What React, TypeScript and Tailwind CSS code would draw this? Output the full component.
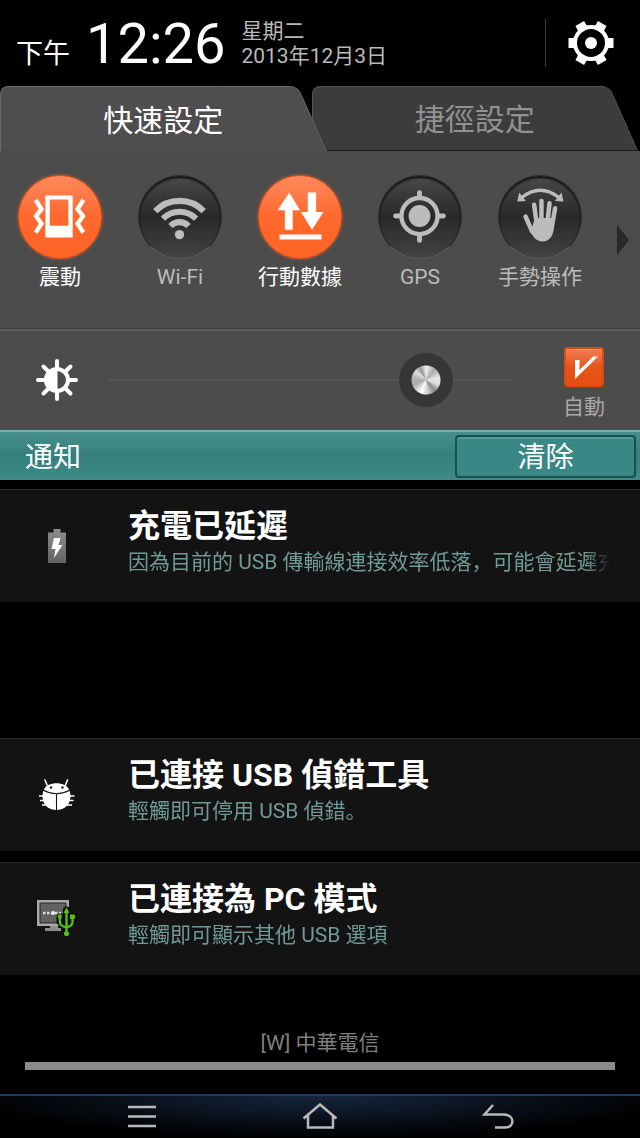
import React, { useState } from 'react';

type Toggle = {
  id: string;
  label: string;
  icon: React.ReactNode;
};

type Notice = {
  title: string;
  text: string;
  icon: React.ReactNode;
  spacing: string;
};

const VibrateIcon = () => (
  <svg viewBox="0 0 84 84" className="size-full" fill="none">
    <path d="M27 20H55V63H27ZM31.5 24V51H50.5V24Z" fill="currentColor" fillRule="evenodd" />
    <path d="M17 24.5L23 34L17.500 41L23 49L17 58M66 24.5L60 34L65.500 41L60 49L66 58" stroke="currentColor" strokeWidth="4.500" />
  </svg>
);

const WifiIcon = () => (
  <svg viewBox="0 0 84 84" className="size-full" fill="none">
    <circle cx="41.500" cy="60" r="4.800" fill="currentColor" />
    <path
      d="M16.700 36A34.500 34.500 0 0 1 66.300 36M24.500 43.600A24 24 0 0 1 58.500 43.600M32.200 51.200A12.900 12.900 0 0 1 50.800 51.200"
      stroke="currentColor"
      strokeWidth="6.200"
    />
  </svg>
);

const DataIcon = () => (
  <svg viewBox="0 0 84 84" className="size-full" fill="currentColor">
    <path d="M31 17L42 35H34.500V55H26.500V35H19Z" />
    <path d="M50 17H58.500V37H66L54.300 55L43 37H50Z" />
    <path d="M21 60H64V65H21Z" />
  </svg>
);

const GpsIcon = () => (
  <svg viewBox="0 0 84 84" className="size-full" fill="none" stroke="currentColor">
    <circle cx="41.500" cy="41" r="11.200" fill="currentColor" stroke="none" />
    <circle cx="41.500" cy="41" r="18.500" strokeWidth="4.500" />
    <path d="M41.500 21V17M41.500 61V66M21.500 41H17M61.500 41H66" strokeWidth="5" strokeLinecap="round" />
  </svg>
);

const HandIcon = () => (
  <svg viewBox="0 0 84 84" className="size-full" fill="none" stroke="currentColor" strokeLinecap="round">
    <path d="M24 21.500Q42.300 7.500 60.600 21.500" strokeWidth="3.500" />
    <path d="M18.700 26L20.700 17L27.500 25.500ZM66 26L64 17L57.200 25.500Z" fill="currentColor" stroke="none" />
    <path d="M36 29.500L38.500 48M43.500 25.500V48M51.800 28L49.500 48M57.500 33L54.500 50M27.200 41.500L34 57" strokeWidth="4.600" />
    <path d="M36.500 43H55.800L56.500 52C55.500 62 51.500 67 45 67C37 67 34 61 31.500 55L34.500 51Z" fill="currentColor" stroke="none" />
  </svg>
);

const GearIcon = () => (
  <svg viewBox="0 0 46 46" className="size-[46px]" fill="#fff">
    {[0, 60, 120, 180, 240, 300].map((angle) => (
      <path key={angle} d="M37 16.500L41 18H45.500V28H41L37 29.500Z" transform={`rotate(${angle} 23 23)`} />
    ))}
    <circle cx="23" cy="23" r="16" fill="none" stroke="#fff" strokeWidth="4" />
    <circle cx="23" cy="23" r="6" />
  </svg>
);

const BrightnessIcon = () => (
  <svg viewBox="0 0 42 42" className="size-[42px]" fill="none" stroke="#fff">
    <circle cx="21" cy="21" r="11" strokeWidth="4" />
    <path d="M21.500 10A11 11 0 0 0 21.500 32Z" fill="#fff" stroke="none" />
    <path
      d="M21 9V2M21 33V40M9 21H2M33 21H40M12.500 12.500L7.500 7.500M29.500 12.500L34.500 7.500M12.500 29.500L7.500 34.500M29.500 29.500L34.500 34.500"
      strokeWidth="4"
      strokeLinecap="round"
    />
  </svg>
);

const BatteryIcon = () => (
  <svg viewBox="0 0 18 34" className="h-[34px] w-[18px]">
    <defs>
      <linearGradient id="battery" x1="0" y1="0" x2="0" y2="1">
        <stop offset="0" stopColor="#8d8d8d" />
        <stop offset="1" stopColor="#636363" />
      </linearGradient>
    </defs>
    <path d="M5.500 0H12.500V3.500H18V34H0V3.500H5.500Z" fill="url(#battery)" />
    <path d="M6 9H12.500L10.500 16H14.500L6 29L7.500 20H3.500Z" fill="#fff" />
  </svg>
);

const BugIcon = () => (
  <svg viewBox="0 0 38 32" className="h-[32px] w-[38px]" fill="none">
    <path d="M9 6L7 1M27.500 6L29.500 1" stroke="#fff" strokeWidth="1.600" strokeLinecap="round" />
    <path d="M1 17H36.500M2 21.500H35.500M4 26H34" stroke="#fff" strokeWidth="1.600" />
    <path d="M6 10.500C9 2 28 2 31 10.500C35 19 31 31 18.500 31C6 31 2 19 6 10.500Z" fill="#fff" />
    <path d="M5 11Q18.500 18.500 32 11M18.500 15V31" stroke="#171717" strokeWidth="1.100" />
    <circle cx="13" cy="8.500" r="1.200" fill="#171717" />
    <circle cx="24.500" cy="8.500" r="1.200" fill="#171717" />
  </svg>
);

const PcIcon = () => (
  <svg viewBox="0 0 40 40" className="size-[40px]" fill="none">
    <path d="M13 26H21V29H24V32H8V29H13Z" fill="#8c8c8c" />
    <path d="M0 1H32V27H0Z" fill="#a9a9a9" />
    <path d="M3 4H29V24H3Z" fill="#626262" stroke="#262626" />
    <path d="M6 14H24" stroke="#ddd" strokeWidth="2.400" strokeDasharray="2.500 1.500" />
    <circle cx="16" cy="14" r="2" fill="#eee" />
    <g stroke="#000" strokeWidth="7" strokeLinejoin="round" strokeLinecap="round">
      <path d="M29.500 11V34M23 18V23L29.500 28M35.500 18V23L29.500 28" />
    </g>
    <path d="M29.500 12V34M22.800 18V23Q23 27 29.500 28.500Q35.500 27 35.500 23V18" stroke="#4fc30c" strokeWidth="2.400" />
    <path d="M29.500 8L32.500 14H26.500ZM33 15.500H38V20H33Z" fill="#4fc30c" />
    <circle cx="22.800" cy="17.500" r="2.200" fill="#4fc30c" />
    <circle cx="29.500" cy="34.500" r="2.600" fill="#4fc30c" />
  </svg>
);

const toggles: Toggle[] = [
  { id: 'vibrate', label: '震動', icon: <VibrateIcon /> },
  { id: 'wifi', label: 'Wi-Fi', icon: <WifiIcon /> },
  { id: 'data', label: '行動數據', icon: <DataIcon /> },
  { id: 'gps', label: 'GPS', icon: <GpsIcon /> },
  { id: 'gesture', label: '手勢操作', icon: <HandIcon /> },
];

const notices: Notice[] = [
  {
    title: '充電已延遲',
    text: '因為目前的 USB 傳輸線連接效率低落，可能會延遲充',
    icon: <BatteryIcon />,
    spacing: 'mt-[9px]',
  },
  { title: '已連接 USB 偵錯工具', text: '輕觸即可停用 USB 偵錯。', icon: <BugIcon />, spacing: 'mt-[136px]' },
  { title: '已連接為 PC 模式', text: '輕觸即可顯示其他 USB 選項', icon: <PcIcon />, spacing: 'mt-[11px]' },
];

// The slanted right edge is a skewed pseudo element behind the label
const tabBase =
  "relative isolate flex-1 pt-1 text-3xl before:absolute before:inset-y-0 before:left-0 before:right-16 before:-z-10 before:rounded-tl-lg before:border-l before:border-t before:content-[''] after:absolute after:inset-y-0 after:right-0 after:-z-10 after:w-20 after:origin-bottom after:skew-x-[24deg] after:rounded-tr-lg after:border-r after:border-t after:content-['']";

export default function NotificationShade() {
  const [active, setActive] = useState<string[]>(['vibrate', 'data']);
  const [brightness, setBrightness] = useState<number>(83);
  const [auto, setAuto] = useState<boolean>(true);
  const [cleared, setCleared] = useState<boolean>(false);

  const handleToggle = (id: string) => {
    setActive(active.includes(id) ? active.filter((item) => item !== id) : [...active, id]);
  };

  return (
    <div className="flex min-h-screen flex-col overflow-hidden bg-black font-[Roboto,'Noto_Sans_CJK_SC',sans-serif] text-white">
      <header className="flex h-[86px] items-center pl-4 pr-[26px]">
        <div className="flex items-baseline gap-4 pt-0.5">
          <span className="text-[27px] leading-none">下午</span>
          <span className="text-[56px] leading-none">12:26</span>
        </div>
        <div className="ml-4 pt-0.5 text-[21px] leading-[25px] text-[#b9b9b9]">
          <p>星期二</p>
          <p>2013年12月3日</p>
        </div>
        <div className="ml-auto h-12 w-px bg-[#3c3c3c]" />
        <button aria-label="設定" className="ml-[22px]">
          <GearIcon />
        </button>
      </header>

      <div className="flex h-[65px] shrink-0 pr-0.5">
        <button className={`${tabBase} z-10 before:border-[#6a6a6a] before:bg-[#4e4e4e] after:border-[#6a6a6a] after:bg-[#4e4e4e]`}>
          快速設定
        </button>
        <button
          className={`${tabBase} -ml-[15px] border-b border-[#1c1c1c] text-[#929292] before:border-[#555] before:bg-[#3c3c3c] after:border-[#555] after:bg-[#3c3c3c]`}
        >
          捷徑設定
        </button>
      </div>

      <section className="bg-[#4c4c4c]">
        <div className="flex h-[177px]">
          <div className="grid flex-1 grid-cols-5 pt-6">
            {toggles.map((toggle) => {
              const on = active.includes(toggle.id);
              return (
                <button
                  key={toggle.id}
                  aria-pressed={on}
                  onClick={() => handleToggle(toggle.id)}
                  className={`flex flex-col items-center ${on ? 'text-white' : 'text-[#bcbcbc]'}`}
                >
                  <span
                    className={`size-[84px] rounded-full border bg-origin-border ${
                      on
                        ? 'border-[#f0500f] bg-linear-to-b from-[#ff8a5c] via-[#ff682c] to-[#ff6426] shadow-[0_0_3px_#c8643c]'
                        : 'border-[#2a2a2a] border-b-[#5c5c5c] bg-linear-to-b from-[#4a4a4a] via-[#292929] to-[#444] shadow-[inset_0_2px_2px_#111]'
                    }`}
                  >
                    {toggle.icon}
                  </span>
                  <span className="text-[21px] leading-9">{toggle.label}</span>
                </button>
              );
            })}
          </div>
          <button aria-label="更多" className="flex w-10 items-center justify-center pl-1.5">
            <svg viewBox="0 0 12 30" className="h-[30px] w-3">
              <path d="M0 0L12 15L0 30Z" fill="#292929" />
            </svg>
          </button>
        </div>

        <div className="flex h-[102px] items-center border-t border-t-[#3b3b3b] pl-9 pr-[35px] shadow-[inset_0_2px_0_#5c5c5c]">
          <BrightnessIcon />
          <input
            type="range"
            aria-label="亮度"
            value={brightness}
            onChange={(e) => setBrightness(Number(e.target.value))}
            className="mx-[29px] h-14 min-w-0 flex-1 appearance-none bg-transparent [&::-webkit-slider-runnable-track]:h-0.5 [&::-webkit-slider-runnable-track]:bg-[#545454] [&::-webkit-slider-thumb]:-mt-[26px] [&::-webkit-slider-thumb]:size-[54px] [&::-webkit-slider-thumb]:appearance-none [&::-webkit-slider-thumb]:rounded-full [&::-webkit-slider-thumb]:bg-[radial-gradient(circle,transparent_14px,#363636_15px),conic-gradient(#eee,#aaa_40deg,#e6e6e6_80deg,#ddd_110deg,#888_140deg,#ccc_170deg,#fff_200deg,#aaa_250deg,#b5b5b5_280deg,#ddd_310deg,#999_335deg,#eee)]"
          />
          <label className="ml-[21px] flex flex-col items-center text-[21px] leading-10 text-[#a8a8a8]">
            <span className="relative mt-3.5 size-10">
              <input
                type="checkbox"
                checked={auto}
                onChange={() => setAuto(!auto)}
                className="block size-10 appearance-none rounded-sm border-2 border-[#d94c14] bg-linear-to-b from-[#f07c50] via-[#e8541a] to-[#e64e12] shadow-[inset_0_1px_0_#f49a78]"
              />
              {auto && (
                <svg viewBox="0 0 40 40" className="pointer-events-none absolute inset-0">
                  <path d="M11 13H15.500V23L29 9.500H34L11 32Z" fill="#fff" />
                </svg>
              )}
            </span>
            自動
          </label>
        </div>
      </section>

      <div className="flex h-[50px] items-center justify-between border-t-2 border-[#79b0ae] bg-linear-to-b from-[#478f8d] via-[#357f7c] to-[#3e8b89] pl-[25px] pr-1">
        <h2 className="pt-1 text-[28px] leading-none">通知</h2>
        <button
          onClick={() => setCleared(true)}
          className="h-[43px] w-[181px] rounded-sm border-2 border-[#17504f] bg-[#398885] pt-1 text-[28px] leading-none shadow-[inset_0_2px_0_#559b99]"
        >
          清除
        </button>
      </div>

      {!cleared && (
        <ul>
          {notices.map((notice) => (
            <li
              key={notice.title}
              className={`flex h-[113px] items-center border-t border-[#2b2b2b] bg-[#131313] ${notice.spacing}`}
            >
              <div className="flex w-[114px] shrink-0 justify-center">{notice.icon}</div>
              <div className="ml-3.5 mr-[30px] min-w-0 flex-1 pb-2">
                <h3 className="text-[32px] font-bold leading-10">{notice.title}</h3>
                <p className="overflow-hidden whitespace-nowrap text-[21px] leading-8 text-[#6f9996] mask-r-from-95% mask-r-to-100%">
                  {notice.text}
                </p>
              </div>
            </li>
          ))}
        </ul>
      )}

      <footer className="mt-auto">
        <p className="text-center text-[21px] leading-[38px] text-[#7f7f7f]">[W] 中華電信</p>
        <div className="mx-[25px] mb-6 h-2 bg-[#8c8c8c]" />
        <nav className="flex h-11 items-center justify-center gap-[138px] border-t-2 border-[#1b3a63] bg-[radial-gradient(ellipse_55%_100%_at_50%_0%,#15263f,#000)] text-[#b9b9b9]">
          <button aria-label="選單">
            <svg viewBox="0 0 40 28" className="h-7 w-10" fill="none" stroke="currentColor" strokeWidth="2.500">
              <path d="M6 4H34M6 13.500H34M6 23H34" />
            </svg>
          </button>
          <button aria-label="主畫面">
            <svg viewBox="0 0 40 28" className="h-7 w-10" fill="none" stroke="currentColor" strokeWidth="2.500">
              <path d="M3.500 15.500L20 1.500L36.500 15.500M8 12V24.500H33V12" />
            </svg>
          </button>
          <button aria-label="返回">
            <svg viewBox="0 0 40 28" className="h-7 w-10" fill="none" stroke="currentColor" strokeWidth="2.500">
              <path d="M15 2L6.500 11.500H26C37 12 37 24.500 27 24.500H17" />
            </svg>
          </button>
        </nav>
      </footer>
    </div>
  );
}
